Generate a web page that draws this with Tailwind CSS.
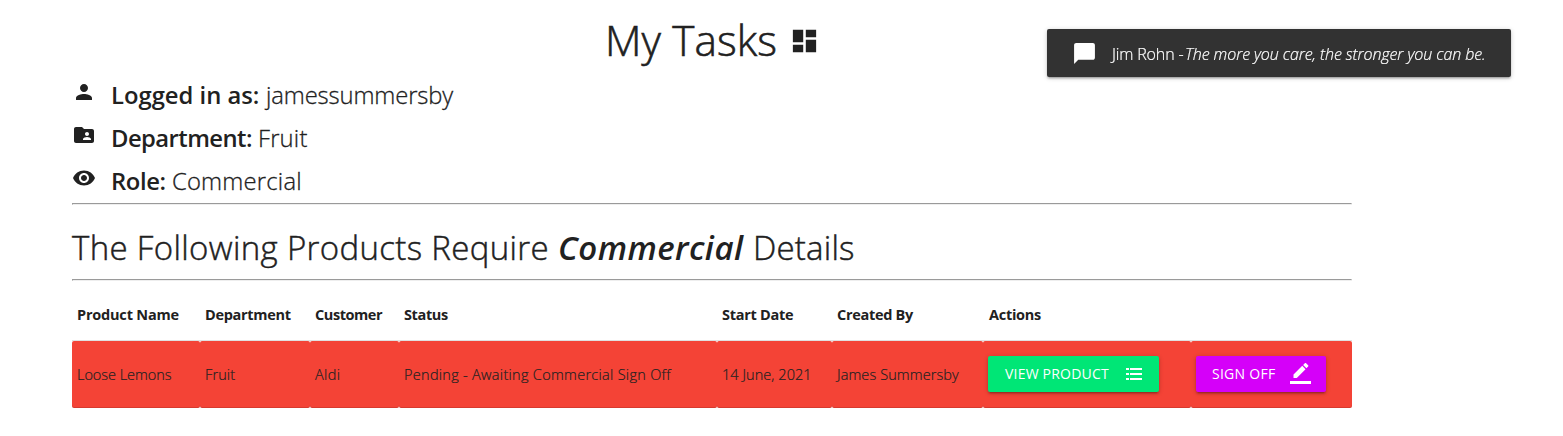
<!DOCTYPE html>
<html lang="en">
<head>
<meta charset="utf-8">
<title>My Tasks</title>
<script src="https://cdn.jsdelivr.net/npm/@tailwindcss/browser@4"></script>
</head>
<body class="bg-white text-[#212121] font-['Open_Sans',sans-serif] font-light overflow-hidden">
<main class="ml-[72px] w-[1280px] flex flex-col">
  <h1 class="h-[73px] pt-[6px] pl-[533px] flex text-[42.3px] leading-[68px] [-webkit-text-stroke:0.6px_#212121]">
    <span class="w-[184px] tracking-[0.1px]">My Tasks</span>
    <svg class="w-[31px] h-[30px] mt-[20px]" viewBox="0 0 24 24" preserveAspectRatio="none" fill="currentColor"><path d="M3 13h8V3H3v10zm0 8h8v-6H3v6zm10 0h8V11h-8v10zm0-18v6h8V3h-8z"/></svg>
  </h1>

  <ul class="mb-px text-[23.8px] leading-[45px] whitespace-nowrap">
    <li class="h-[43px] flex">
      <svg class="size-6 mt-[7px] mr-[15px]" viewBox="0 0 24 24" fill="currentColor"><path d="M12 12c2.21 0 4-1.79 4-4s-1.79-4-4-4-4 1.79-4 4 1.79 4 4 4zm0 2c-2.67 0-8 1.34-8 4v2h16v-2c0-2.66-5.33-4-8-4z"/></svg>
      <strong class="w-[155px] font-semibold tracking-[0px]">Logged in as:</strong><span class="tracking-[-0.12px] [-webkit-text-stroke:0.3px_#212121]">jamessummersby</span>
    </li>
    <li class="h-[43px] flex">
      <svg class="size-6 mt-[7px] mr-[15px]" viewBox="0 0 24 24" fill="currentColor"><path d="M20 6h-8l-2-2H4c-1.1 0-1.99.9-1.99 2L2 18c0 1.1.9 2 2 2h16c1.1 0 2-.9 2-2V8c0-1.1-.9-2-2-2zm-5 3c1.1 0 2 .9 2 2s-.9 2-2 2-2-.9-2-2 .9-2 2-2zm4 8h-8v-1c0-1.33 2.67-2 4-2s4 .67 4 2v1z"/></svg>
      <strong class="w-[147px] font-semibold tracking-[-0.55px]">Department:</strong><span class="tracking-[0.2px] [-webkit-text-stroke:0.3px_#212121]">Fruit</span>
    </li>
    <li class="h-[43px] flex">
      <svg class="size-6 mt-[7px] mr-[15px]" viewBox="0 0 24 24" fill="currentColor"><path d="M12 4.500C7 4.500 2.730 7.610 1 12c1.730 4.390 6 7.500 11 7.500s9.270-3.110 11-7.500c-1.730-4.390-6-7.500-11-7.500zM12 17c-2.760 0-5-2.240-5-5s2.240-5 5-5 5 2.240 5 5-2.240 5-5 5zm0-8c-1.660 0-3 1.340-3 3s1.340 3 3 3 3-1.340 3-3-1.340-3-3-3z"/></svg>
      <strong class="w-[61px] font-semibold tracking-[-0.4px]">Role:</strong><span class="tracking-[0.2px] [-webkit-text-stroke:0.3px_#212121]">Commercial</span>
    </li>
  </ul>

  <hr class="h-[2px] border border-t-[#9a9a9a] border-l-[#9a9a9a] border-r-[#eee] border-b-[#eee]">
  <h2 class="h-[74px] pt-[11px] flex text-[33px] leading-[64px] whitespace-nowrap">
    <span class="w-[486px] tracking-[0.34px] [-webkit-text-stroke:0.45px_#212121]">The Following Products Require</span>
    <em class="w-[195px] font-semibold italic tracking-[0.45px]">Commercial</em>
    <span class="tracking-[0.2px] [-webkit-text-stroke:0.45px_#212121]">Details</span>
  </h2>
  <hr class="h-[2px] border border-t-[#9a9a9a] border-l-[#9a9a9a] border-r-[#eee] border-b-[#eee]">

  <table class="w-[1280px] table-fixed border-separate border-spacing-0 text-[14.5px] leading-5 text-left whitespace-nowrap">
    <colgroup><col class="w-[128px]"><col class="w-[110px]"><col class="w-[89px]"><col class="w-[318px]"><col class="w-[115px]"><col class="w-[151px]"><col class="w-[208px]"><col class="w-[161px]"></colgroup>
    <thead>
      <tr class="h-[60px] *:border-b *:border-black/12 *:pt-[8px] *:pb-0 *:px-[5px] *:font-bold">
        <th class="tracking-[-0.2px]">Product Name</th><th class="tracking-[-0.3px]">Department</th><th class="tracking-[-0.44px]">Customer</th><th class="tracking-[-0.37px]">Status</th><th class="tracking-[-0.27px]">Start Date</th><th class="tracking-[-0.3px]">Created By</th><th class="tracking-[-0.28px]"><span class="pl-px">Actions</span></th><th></th>
      </tr>
    </thead>
    <tbody>
      <tr class="h-[67px] [-webkit-text-stroke:0.2px] *:bg-[#f44336] *:rounded-[2px] *:py-0 *:px-[5px] *:shadow-[inset_0_-1px_0_rgba(0,0,0,0.12)]">
        <td class="tracking-[-0.05px]">Loose Lemons</td><td class="tracking-[0.1px]">Fruit</td><td class="tracking-[0.4px]">Aldi</td><td class="tracking-[0.29px]">Pending - Awaiting Commercial Sign Off</td><td class="tracking-[0.05px]">14 June, 2021</td><td class="tracking-[0.1px]">James Summersby</td>
        <td class="[-webkit-text-stroke:0px]">
          <a class="flex w-[171px] h-9 mt-[-1px] pl-[17px] rounded-[2px] bg-[#00e676] text-white font-normal text-[14px] leading-9 tracking-[0.2px] shadow-[0_2px_2px_0_rgba(0,0,0,0.14),0_3px_1px_-2px_rgba(0,0,0,0.12),0_1px_5px_0_rgba(0,0,0,0.2)]"><span class="w-[121px]">VIEW PRODUCT</span>
            <svg class="w-4 h-3 mt-3" viewBox="0 0 16 12" fill="currentColor"><path d="M0 0h3v2H0zM0 5h3v2H0zM0 10h3v2H0zM4 0h12v2H4zM4 5h12v2H4zM4 10h12v2H4z"/></svg></a>
        </td>
        <td class="[-webkit-text-stroke:0px]">
          <a class="flex w-[130px] h-9 mt-[-1px] pl-4 rounded-[2px] bg-[#d500f9] text-white font-normal text-[14px] leading-9 tracking-[0.26px] shadow-[0_2px_2px_0_rgba(0,0,0,0.14),0_3px_1px_-2px_rgba(0,0,0,0.12),0_1px_5px_0_rgba(0,0,0,0.2)]"><span class="w-[78px]">SIGN OFF</span>
            <svg class="size-[21px] mt-[7px]" viewBox="0 0 24 24" fill="currentColor"><path d="M17.750 7L14 3.250l-10 10V17h3.750l10-10zm2.960-2.960c.39-.39.39-1.020 0-1.410L18.370.29c-.39-.39-1.020-.39-1.410 0L15 2.250 18.750 6l1.960-1.960zM0 20.600h24v3.400H0z"/></svg></a>
        </td>
      </tr>
    </tbody>
  </table>
</main>

<!-- Toast notification -->
<div class="fixed left-[1047px] top-[29px] w-[464px] h-12 flex pl-[25px] rounded-[2px] bg-[#323232] text-white text-[16px] leading-[50px] whitespace-nowrap [-webkit-text-stroke:0.2px_white] shadow-[0_2px_2px_0_rgba(0,0,0,0.14),0_3px_1px_-2px_rgba(0,0,0,0.12),0_1px_5px_0_rgba(0,0,0,0.2)]">
  <svg class="size-[25px] mt-[12px] mr-[15px]" viewBox="0 0 24 24" fill="currentColor"><path d="M20 2H4c-1.100 0-2 .9-2 2v18l4-4h14c1.100 0 2-.9 2-2V4c0-1.100-.9-2-2-2z"/></svg>
  <span class="w-[73px] tracking-[-0.15px]">Jim Rohn -</span><i class="tracking-[-0.08px]">The more you care, the stronger you can be.</i>
</div>
</body>
</html>
